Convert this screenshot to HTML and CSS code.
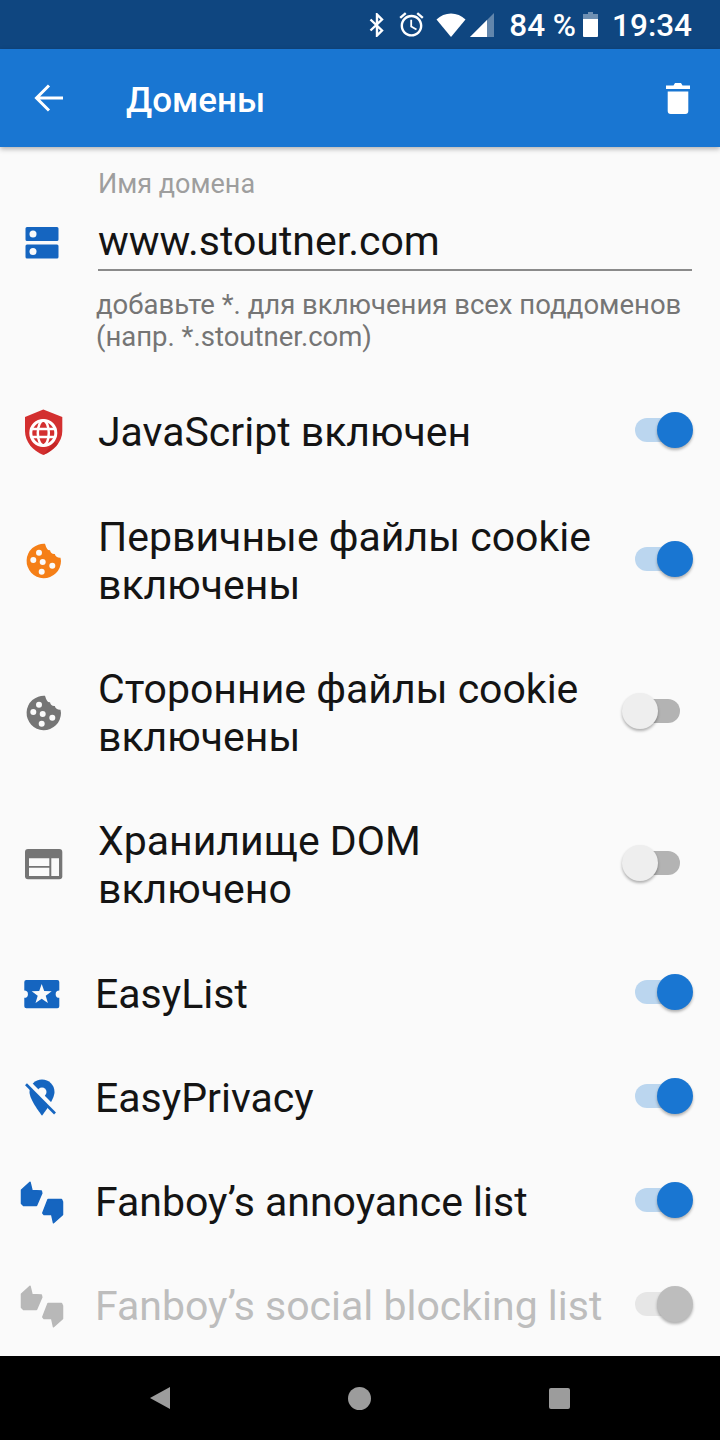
FILE: index.html
```html
<!DOCTYPE html>
<html lang="ru">
<head>
<meta charset="utf-8">
<title>Домены</title>
<link rel="stylesheet" href="styles.css">
</head>
<body>
<div class="phone">
  <div class="statusbar">
    <svg class="st-bt" viewBox="0 0 16 24"><path d="M1.500 6.500 13 17.500 8 22.500V1.500l5 5L1.500 17.500" fill="none" stroke="#fff" stroke-width="2.400"/></svg>
    <svg class="st-alarm" viewBox="0 0 24 24"><path fill="#fff" d="M22 5.720l-4.600-3.860-1.290 1.530 4.600 3.860L22 5.720zM7.880 3.390L6.600 1.860 2 5.710l1.290 1.530 4.590-3.850zM12.500 8H11v6l4.750 2.850.75-1.230-4-2.370V8zM12 4c-4.970 0-9 4.030-9 9s4.020 9 9 9c4.970 0 9-4.030 9-9s-4.030-9-9-9zm0 16c-3.870 0-7-3.130-7-7s3.130-7 7-7 7 3.130 7 7-3.130 7-7 7z"/></svg>
    <svg class="st-wifi" viewBox="0 0 30 24"><path fill="#fff" d="M0.500 6.500C4.500 2.700 9.500.5 15 .5s10.500 2.200 14.500 6L15 24z"/></svg>
    <svg class="st-signal" viewBox="0 0 24 24"><path fill="#fff" fill-opacity=".35" d="M24 0v24H0z"/><path fill="#fff" d="M17 7v17H0z"/></svg>
    <span class="st-text st-pct">84 %</span>
    <svg class="st-batt" viewBox="0 0 15 25"><path fill="#fff" fill-opacity=".4" d="M5 0h5v2h5v6H0V2h5z"/><path fill="#fff" d="M0 7h15v17a1 1 0 0 1-1 1H1a1 1 0 0 1-1-1z"/></svg>
    <span class="st-text st-time">19:34</span>
  </div>

  <header class="toolbar">
    <svg class="tb-back" viewBox="0 0 30 30"><path d="M29 15H3M15 2.500 2.500 15 15 27.500" fill="none" stroke="#fff" stroke-width="3"/></svg>
    <h1 class="tb-title">Домены</h1>
    <svg class="tb-delete" viewBox="0 0 24 32"><path fill="#fff" d="M1.700 9.500h20.600V29a3 3 0 0 1-3 3H4.700a3 3 0 0 1-3-3zM0 3.500h7.500L9 1h6l1.500 2.500H24v3.500H0z"/></svg>
  </header>

  <main class="content">
    <section class="domain">
      <svg class="domain-icon" viewBox="0 0 48 48"><path fill="#1565c0" d="M7 4h30a1.500 1.500 0 0 1 1.500 1.500v11A1.500 1.500 0 0 1 37 18H7a1.500 1.500 0 0 1-1.500-1.500v-11A1.500 1.500 0 0 1 7 4zM7 21.500h30a1.500 1.500 0 0 1 1.500 1.500v11a1.500 1.500 0 0 1-1.500 1.500H7A1.500 1.500 0 0 1 5.500 34V23A1.500 1.500 0 0 1 7 21.500z"/><circle cx="13" cy="11" r="3.500" fill="#fafafa"/><circle cx="13" cy="28.500" r="3.500" fill="#fafafa"/></svg>
      <div class="domain-field">
        <div class="domain-label">Имя домена</div>
        <div class="domain-input">www.stoutner.com</div>
        <div class="domain-help">добавьте *. для включения всех поддоменов<br>(напр. *.stoutner.com)</div>
      </div>
    </section>

    <div class="row">
      <svg class="row-icon" viewBox="0 0 48 48"><path fill="#d32f2f" d="M23.300 1.500 5 9v14c0 11 8 20 18.300 24 10.400-4 19-13 19-24V9z"/><path fill="#b71c1c" fill-opacity=".5" d="M34 34 23.300 47c6-2.300 11-6.500 14.800-11.500z"/><g fill="none" stroke="#fff"><circle cx="23.300" cy="25" r="12.500" stroke-width="3"/><ellipse cx="23.300" cy="25" rx="5.500" ry="12.500" stroke-width="2.500"/><path d="M11 21h24.600M11 29h24.600" stroke-width="2.500"/></g></svg>
      <div class="row-text">JavaScript включен</div>
      <div class="switch switch-on"><span class="track"></span><span class="thumb"></span></div>
    </div>

    <div class="row row-two row-nudge">
      <svg class="row-icon cookie-orange" viewBox="0 0 48 48"><path class="cookie" d="M25 6.800A17.200 17.200 0 1 0 41 24L40.500 20.700Q36 21 34.800 17Q31 17.500 30 13.300Q27 14 25 6.800z"/><g class="crumbs"><circle cx="19" cy="15.700" r="3"/><circle cx="13.300" cy="23" r="3"/><circle cx="22.700" cy="25" r="3"/><circle cx="32.300" cy="28.700" r="3"/><circle cx="21.700" cy="34.700" r="3"/></g></svg>
      <div class="row-text">Первичные файлы cookie<br>включены</div>
      <div class="switch switch-on"><span class="track"></span><span class="thumb"></span></div>
    </div>

    <div class="row row-two">
      <svg class="row-icon cookie-grey" viewBox="0 0 48 48"><path class="cookie" d="M25 6.800A17.200 17.200 0 1 0 41 24L40.500 20.700Q36 21 34.800 17Q31 17.500 30 13.300Q27 14 25 6.800z"/><g class="crumbs"><circle cx="19" cy="15.700" r="3"/><circle cx="13.300" cy="23" r="3"/><circle cx="22.700" cy="25" r="3"/><circle cx="32.300" cy="28.700" r="3"/><circle cx="21.700" cy="34.700" r="3"/></g></svg>
      <div class="row-text">Сторонние файлы cookie<br>включены</div>
      <div class="switch"><span class="track"></span><span class="thumb"></span></div>
    </div>

    <div class="row row-two">
      <svg class="row-icon" viewBox="0 0 48 48"><rect x="5" y="8" width="37.300" height="30.300" rx="3" fill="#757575"/><path fill="#fafafa" d="M9 17.300h20.300V25H9zM9 26.700h20.300V35H9zM31.300 17.300H39V35h-7.700z"/></svg>
      <div class="row-text">Хранилище DOM<br>включено</div>
      <div class="switch"><span class="track"></span><span class="thumb"></span></div>
    </div>

    <div class="row row-list row-nudge">
      <svg class="row-icon" viewBox="0 0 48 48"><path fill="#1565c0" d="M6.300 10h31a2 2 0 0 1 2 2v8.500a3.500 3.500 0 0 0 0 7.300v8.500a2 2 0 0 1-2 2h-31a2 2 0 0 1-2-2v-8.500a3.500 3.500 0 0 0 0-7.300V12a2 2 0 0 1 2-2z"/><path fill="#fafafa" d="M21.700 14l2.500 7 7.500.2-6 4.500 2.200 7.300-6.200-4.300-6.200 4.300 2.200-7.300-6-4.500 7.500-.2z"/></svg>
      <div class="row-text">EasyList</div>
      <div class="switch switch-on"><span class="track"></span><span class="thumb"></span></div>
    </div>

    <div class="row row-list">
      <svg class="row-icon" viewBox="0 0 48 48"><path fill="#1565c0" d="M22 5.500c7 0 12.500 5.500 12.500 12.500 0 8-12.500 23.700-12.500 23.700S9.500 26 9.500 18C9.500 11 15 5.500 22 5.500z"/><path d="M7.500 8.500 36.500 37.800" stroke="#fafafa" stroke-width="6"/><circle cx="22" cy="18" r="4.500" fill="#fafafa"/><path d="M6 10.200 35 39.500" stroke="#1565c0" stroke-width="2.700"/></svg>
      <div class="row-text">EasyPrivacy</div>
      <div class="switch switch-on"><span class="track"></span><span class="thumb"></span></div>
    </div>

    <div class="row row-list">
      <svg class="row-icon thumbs-blue" viewBox="0 0 48 48"><path d="M1.500 12 10 4.200 12 12.500 21.300 13 21.800 15.300 16.500 27.500 3.500 27.500 1.500 25.500zM22.800 35 28 21.500 41.500 21.500 42.500 23.700 42.500 36.800 33.500 44.800 31.700 36.500 24 36.500z"/></svg>
      <div class="row-text">Fanboy’s annoyance list</div>
      <div class="switch switch-on"><span class="track"></span><span class="thumb"></span></div>
    </div>

    <div class="row row-list row-disabled">
      <svg class="row-icon thumbs-grey" viewBox="0 0 48 48"><path d="M1.500 12 10 4.200 12 12.500 21.300 13 21.800 15.300 16.500 27.500 3.500 27.500 1.500 25.500zM22.800 35 28 21.500 41.500 21.500 42.500 23.700 42.500 36.800 33.500 44.800 31.700 36.500 24 36.500z"/></svg>
      <div class="row-text">Fanboy’s social blocking list</div>
      <div class="switch switch-on"><span class="track"></span><span class="thumb"></span></div>
    </div>
  </main>

  <nav class="navbar">
    <span class="nav-cell"><svg class="nav-back" viewBox="0 0 20 22"><path d="M20 0v22L0 11z"/></svg></span>
    <span class="nav-cell"><span class="nav-home"></span></span>
    <span class="nav-cell"><span class="nav-recent"></span></span>
  </nav>
</div>
</body>
</html>
```

FILE: styles.css
```css
* { box-sizing: border-box; }
html, body { margin: 0; padding: 0; }
body { font-family: Roboto, "Noto Sans", sans-serif; background: #fafafa; }

.phone { width: 720px; height: 1440px; display: flex; flex-direction: column; overflow: hidden; }

/* status bar */
.statusbar { height: 49px; flex: none; background: #0f4680; display: flex; align-items: center; padding-right: 28px; justify-content: flex-end; color: #fff; }
.st-bt { width: 16px; height: 24px; margin-right: 12px; }
.st-alarm { width: 29px; height: 29px; margin-right: 10px; }
.st-wifi { width: 30px; height: 24px; margin-right: 4px; }
.st-signal { width: 24px; height: 24px; margin-right: 15px; }
.st-batt { width: 15px; height: 25px; margin-right: 14px; }
.st-text { font-size: 31.5px; line-height: 49px; padding-top: 2px; font-weight: 500; }
.st-pct { margin-right: 7px; }

/* toolbar */
.toolbar { height: 98px; flex: none; background: #1976d2; display: flex; align-items: center; padding: 0 30px 0 34px; box-shadow: 0 2px 5px rgba(0,0,0,.3); position: relative; z-index: 1; }
.tb-back { width: 30px; height: 30px; margin-right: 62px; }
.tb-title { flex: 1; margin: 0; padding-top: 6px; font-size: 35px; font-weight: 500; color: #fff; line-height: 48px; }
.tb-delete { width: 24px; height: 32px; }

/* content */
.content { flex: 1; min-height: 0; overflow: hidden; background: #fafafa; }

.domain { display: flex; padding: 20px 28px 0 20px; height: 233px; }
.domain-icon { width: 48px; height: 48px; flex: none; margin-top: 56px; }
.domain-field { flex: 1; margin-left: 30px; }
.domain-label { font-size: 27px; line-height: 34px; color: #9e9e9e; }
.domain-input { font-size: 41px; line-height: 50px; height: 70px; padding-top: 15px; color: #141414; border-bottom: 2px solid #8a8a8a; }
.domain-help { font-size: 27.5px; line-height: 32px; color: #757575; margin: 18px 0 0 -2px; white-space: nowrap; }

.row { display: flex; align-items: center; height: 104px; padding: 0 27px 0 20px; }
.row-two { height: 152px; }
.row-nudge { margin-top: 1px; }
.row-icon { width: 48px; height: 48px; flex: none; }
.row-text { flex: 1; margin-left: 30px; font-size: 41px; line-height: 48px; color: #141414; white-space: nowrap; }
.row-list .row-text { margin-left: 27px; }
.row-disabled .row-text { color: #bdbdbd; }

.cookie-orange .cookie { fill: #f57f17; }
.cookie-grey .cookie { fill: #757575; }
.crumbs { fill: #fafafa; }
.thumbs-blue { fill: #1565c0; stroke: #1565c0; stroke-linejoin: round; stroke-width: 1.500; }
.thumbs-grey { fill: #b8b8b8; stroke: #b8b8b8; stroke-linejoin: round; stroke-width: 1.500; }

/* switches */
.switch { position: relative; flex: none; width: 72px; height: 36px; margin-bottom: 4px; }
.track { position: absolute; left: 14px; top: 6px; width: 45px; height: 24px; border-radius: 12px; background: #b3b3b3; }
.thumb { position: absolute; left: 1px; top: 0; width: 36px; height: 36px; border-radius: 50%; background: #eeeeee; box-shadow: 0 2px 3px rgba(0,0,0,.3); }
.switch-on .track { background: #bbd6ef; }
.switch-on .thumb { left: 36px; background: #1976d2; }
.row-disabled .track { background: #e6e6e6; }
.row-disabled .thumb { background: #bdbdbd; }

/* nav */
.navbar { height: 84px; flex: none; background: #000; display: flex; justify-content: center; align-items: center; padding-right: 2px; }
.nav-cell { width: 200px; display: flex; justify-content: center; align-items: center; height: 24px; }
.nav-back { width: 20px; height: 22px; margin-left: 2px; fill: #9c9c9c; }
.nav-home { width: 23px; height: 23px; border-radius: 50%; background: #9c9c9c; }
.nav-recent { width: 21px; height: 21px; border-radius: 2px; background: #9c9c9c; }
```
